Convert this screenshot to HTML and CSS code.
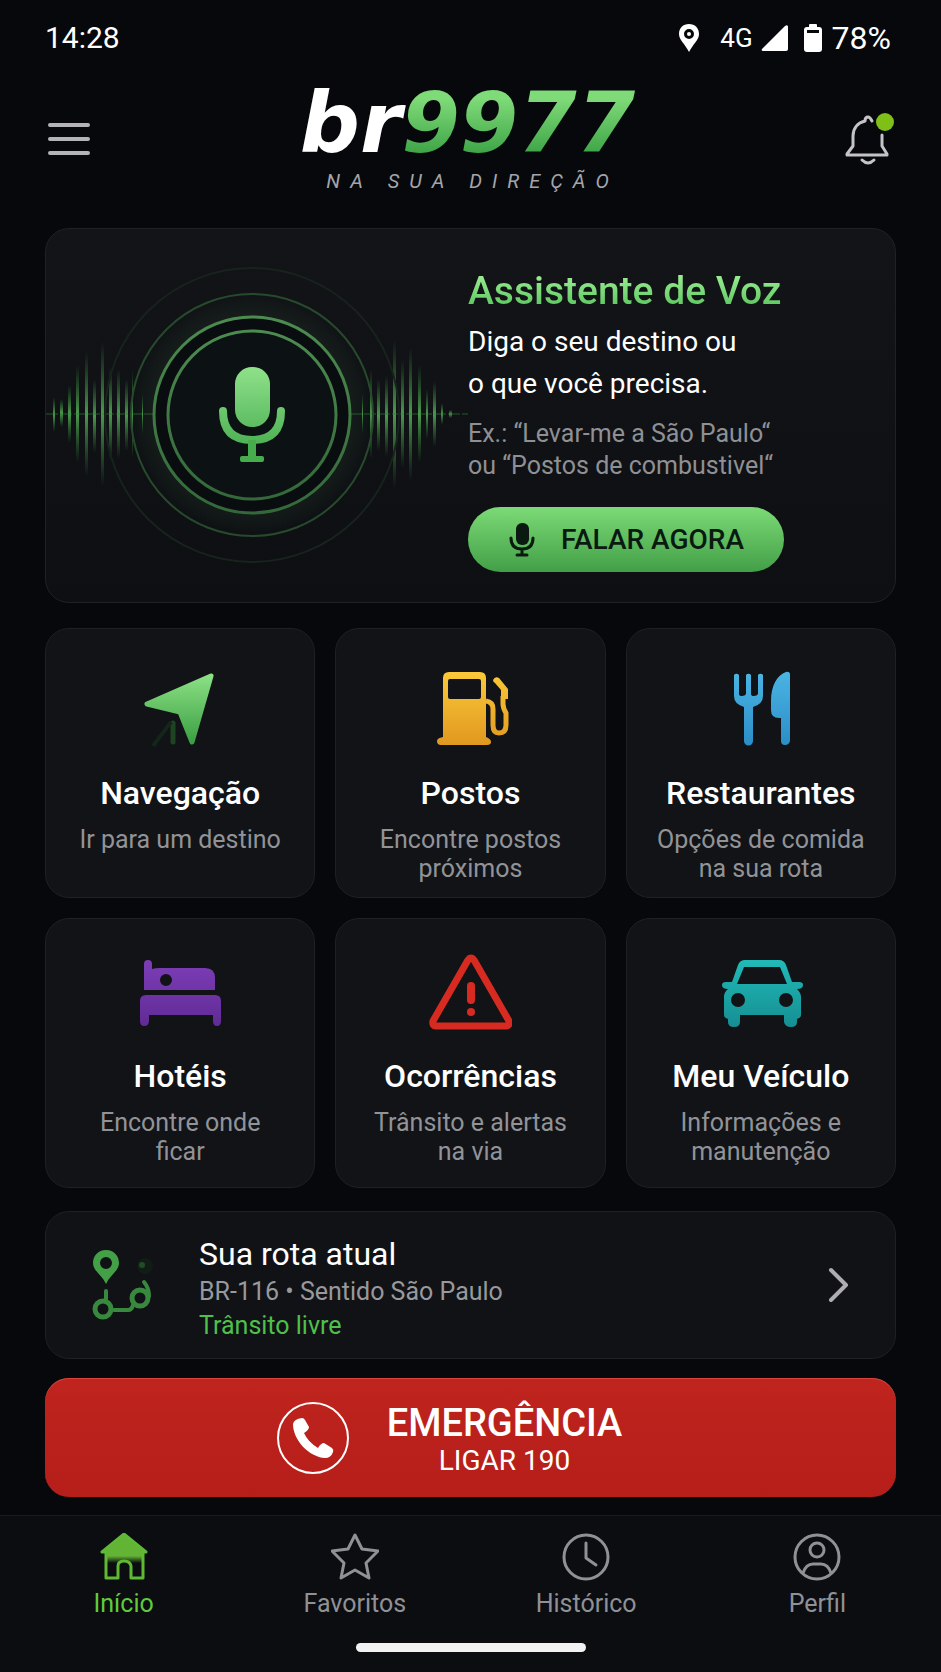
FILE: index.html
```html
<!DOCTYPE html>
<html lang="pt-BR">
<head>
    <meta charset="UTF-8">
    <meta name="viewport" content="width=device-width, initial-scale=1.0">
    <title>br9977 | Na sua direção</title>

    <link rel="stylesheet" href="styles.css">
</head>
<body>

    <!-- shared gradients -->
    <svg class="defs" aria-hidden="true">
        <defs>
            <linearGradient id="green" x1="0" y1="0" x2="0" y2="1">
                <stop offset="0" stop-color="#8be084"/>
                <stop offset="1" stop-color="#3c9f43"/>
            </linearGradient>
            <linearGradient id="yellow" x1="0" y1="0" x2="0" y2="76" gradientUnits="userSpaceOnUse">
                <stop offset="0" stop-color="#fbca3a"/>
                <stop offset="1" stop-color="#e0971f"/>
            </linearGradient>
            <linearGradient id="blue" x1="0" y1="0" x2="0" y2="76" gradientUnits="userSpaceOnUse">
                <stop offset="0" stop-color="#4bb5e4"/>
                <stop offset="1" stop-color="#2b8cc6"/>
            </linearGradient>
            <linearGradient id="purple" x1="0" y1="0" x2="0" y2="76" gradientUnits="userSpaceOnUse">
                <stop offset="0" stop-color="#7f3fba"/>
                <stop offset="1" stop-color="#5f2a94"/>
            </linearGradient>
            <linearGradient id="teal" x1="0" y1="0" x2="0" y2="76" gradientUnits="userSpaceOnUse">
                <stop offset="0" stop-color="#22bdb9"/>
                <stop offset="1" stop-color="#158d93"/>
            </linearGradient>
            <linearGradient id="mic" x1="0" y1="138" x2="0" y2="234" gradientUnits="userSpaceOnUse">
                <stop offset="0" stop-color="#8fe18a"/>
                <stop offset="1" stop-color="#3fa648"/>
            </linearGradient>
            <linearGradient id="ring" x1="0" y1="0" x2="0" y2="1">
                <stop offset="0" stop-color="#4d8c50"/>
                <stop offset="1" stop-color="#34683a"/>
            </linearGradient>
            <linearGradient id="bar" x1="0" y1="0" x2="0" y2="1">
                <stop offset="0" stop-color="#3f9a45" stop-opacity="0"/>
                <stop offset="0.5" stop-color="#56b458"/>
                <stop offset="1" stop-color="#3f9a45" stop-opacity="0"/>
            </linearGradient>
            <radialGradient id="glow">
                <stop offset="0.7" stop-color="#2f5a34" stop-opacity="0.25"/>
                <stop offset="1" stop-color="#2f5a34" stop-opacity="0"/>
            </radialGradient>
            <linearGradient id="house" x1="0" y1="0" x2="0" y2="1">
                <stop offset="0.5" stop-color="#63b334"/>
                <stop offset="0.66" stop-color="#63b334" stop-opacity="0"/>
            </linearGradient>
        </defs>
    </svg>

    <div class="statusbar">
        <span class="time">14:28</span>
        <div class="status">
            <svg width="22" height="28" viewBox="0 0 22 28">
                <path fill="#fff" fill-rule="evenodd" d="M11 0C5 0 1 4 1 10c0 6 6 10 10 18 4-8 10-12 10-18C21 4 17 0 11 0zm0 5a5 5 0 1 1 0 10 5 5 0 0 1 0-10z"/>
                <circle cx="11" cy="10" r="2" fill="#fff"/>
            </svg>
            <span class="network">4G</span>
            <svg width="28" height="28" viewBox="0 0 28 28">
                <path fill="#fff" d="M27 3v22q0 2-2 2H2q-2 0-1-2L24 2q3-2 3 1z"/>
            </svg>
            <svg class="battery" width="18" height="28" viewBox="0 0 18 28">
                <path fill="#fff" fill-rule="evenodd" d="M5 1q0-1 1-1h6q1 0 1 1v2h2q3 0 3 3v19q0 3-3 3H3q-3 0-3-3V6q0-3 3-3h2zM3 6v3h12V6z"/>
            </svg>
            <span class="charge">78%</span>
        </div>
    </div>

    <header>
        <button class="iconbtn" aria-label="Menu">
            <svg width="44" height="52" viewBox="0 0 44 52" stroke="#b4b4b8" stroke-width="4" stroke-linecap="round">
                <path d="M3 12h38M3 26h38M3 40h38"/>
            </svg>
        </button>

        <div class="brand">
            <h1><span class="br">br</span><span class="num">9977</span></h1>
            <p>NA SUA DIREÇÃO</p>
        </div>

        <button class="iconbtn" aria-label="Notificações">
            <svg width="52" height="52" viewBox="0 0 52 52">
                <g fill="none" stroke="#c4c4c8" stroke-width="3" stroke-linecap="round" stroke-linejoin="round">
                    <path d="M28 8c-1-2-2-4-4-4s-3 2-3 4C13 10 9 16 9 23v10L3 41v1h40v-1l-5-8V22"/>
                    <path d="M18 47q6 6 12 0"/>
                </g>
                <circle cx="41" cy="9" r="9" fill="#7fc018"/>
            </svg>
        </button>
    </header>

    <main>
        <section class="voice">
            <svg class="waves" width="426" height="373" viewBox="0 0 426 373" aria-hidden="true">
                <g fill="url(#bar)" opacity="0.85">
                    <rect x="7" y="168" width="2" height="35"/>
                    <rect x="14" y="170" width="3" height="28"/>
                    <rect x="22" y="156" width="3" height="58"/>
                    <rect x="30" y="136" width="3" height="98"/>
                    <rect x="39" y="122" width="3" height="126"/>
                    <rect x="47" y="150" width="3" height="74"/>
                    <rect x="55" y="112" width="3" height="146"/>
                    <rect x="63" y="138" width="3" height="94"/>
                    <rect x="71" y="140" width="3" height="90"/>
                    <rect x="79" y="150" width="3" height="72"/>
                    <rect x="86" y="140" width="1" height="90"/>
                    <rect x="96" y="165" width="1" height="40"/>
                    <rect x="316" y="165" width="1" height="40"/>
                    <rect x="324" y="140" width="2" height="90"/>
                    <rect x="331" y="150" width="3" height="72"/>
                    <rect x="339" y="146" width="3" height="82"/>
                    <rect x="347" y="110" width="3" height="150"/>
                    <rect x="355" y="130" width="3" height="110"/>
                    <rect x="363" y="118" width="3" height="134"/>
                    <rect x="372" y="136" width="3" height="98"/>
                    <rect x="380" y="160" width="2" height="50"/>
                    <rect x="387" y="152" width="3" height="66"/>
                    <rect x="395" y="174" width="2" height="22"/>
                    <rect x="403" y="181" width="3" height="8"/>
                </g>
                <path d="M0 185h108M304 185h118" stroke="#2f7a36" stroke-dasharray="12 2" opacity="0.7"/>
                <circle cx="206" cy="186" r="147" fill="none" stroke="#17231c" stroke-width="2"/>
                <circle cx="206" cy="186" r="121" fill="url(#glow)" stroke="#274a2c" stroke-width="2"/>
                <circle cx="206" cy="186" r="98" fill="#0a0d0f" stroke="url(#ring)" stroke-width="3"/>
                <circle cx="206" cy="186" r="84" fill="#0c1113" stroke="url(#ring)" stroke-width="3"/>
                <rect x="189" y="138" width="35" height="60" rx="17" fill="url(#mic)"/>
                <path d="M177 182q0 29 29 29t29-29" fill="none" stroke="url(#mic)" stroke-width="8" stroke-linecap="round"/>
                <path d="M202 211h8v16h6q2 0 2 2v2q0 2-2 2h-20q-2 0-2-2v-2q0-2 2-2h6z" fill="#46ac4c"/>
            </svg>

            <div class="voicetext">
                <h2>Assistente de Voz</h2>
                <p class="lead">Diga o seu destino ou<br>o que você precisa.</p>
                <p class="example">Ex.: “Levar-me a São Paulo“<br>ou “Postos de combustivel“</p>
                <button class="speakbtn">
                    <svg width="26" height="36" viewBox="0 0 26 36">
                        <rect x="7" y="1" width="13" height="22" rx="6" fill="#0a1a10"/>
                        <path d="M2 16q0 11 11 11t11-11M13 27v6M8 33h10" fill="none" stroke="#0a1a10" stroke-width="3" stroke-linecap="round"/>
                    </svg>
                    FALAR AGORA
                </button>
            </div>
        </section>

        <section class="services">
            <a class="card" href="#navegacao">
                <svg width="84" height="76" viewBox="-4 0 84 76">
                    <path d="M69 5 5 33l33 8 12 30z" fill="url(#green)" stroke="url(#green)" stroke-width="5" stroke-linejoin="round"/>
                    <path d="M31 52v19" stroke="#1d4522" stroke-width="5" stroke-linecap="round"/>
                    <path d="M29 51 11 75" stroke="#132619" stroke-width="4"/>
                </svg>
                <h3>Navegação</h3>
                <p>Ir para um destino</p>
            </a>

            <a class="card" href="#postos">
                <svg width="84" height="76" viewBox="-5 0 84 76">
                    <path fill="url(#yellow)" fill-rule="evenodd" d="M10 66V7q0-6 6-6h31q6 0 6 6v59q5 2 5 5 0 3-4 3H8q-4 0-4-4 0-3 6-4zM17 8q-2 0-2 2v16q0 2 2 2h29q2 0 2-2V10q0-2-2-2z"/>
                    <path d="M53 30q7 1 7 8v16q0 8 6 8 7 0 7-8V42q-3-5-3-9v-8" fill="none" stroke="url(#yellow)" stroke-width="5" stroke-linejoin="round"/>
                    <path d="M60 9q2-4 6-2l9 11v10h-7v-9l-6-7q-2-1-2-3z" fill="url(#yellow)"/>
                </svg>
                <h3>Postos</h3>
                <p>Encontre postos<br>próximos</p>
            </a>

            <a class="card" href="#restaurantes">
                <svg width="84" height="76" viewBox="-4 0 84 76">
                    <path fill="url(#blue)" d="M11 4a3 3 0 0 1 5 0v19q0 2 3 2t4-2V4a3 3 0 0 1 5 0v19q0 2 3 2t4-2V4a3 3 0 0 1 5 0v21q0 8-10 11v34a4 4 0 0 1-9 0V36Q11 33 11 25z"/>
                    <path d="M67 4q0-4-4-3c-9 3-15 14-15 29v9q0 8 8 8h2v23q0 4 4 4t5-4z" fill="url(#blue)"/>
                </svg>
                <h3>Restaurantes</h3>
                <p>Opções de comida<br>na sua rota</p>
            </a>

            <a class="card" href="#hoteis">
                <svg width="84" height="76" viewBox="0 0 84 76">
                    <path fill="url(#purple)" fill-rule="evenodd" d="M6 36V10q0-4 4-4t4 4v5q3-1 8-1h45q10 0 10 10v12zM28 20a6 6 0 1 0 0 12 6 6 0 0 0 0-12z"/>
                    <path fill="url(#purple)" d="M2 47q0-6 6-6h69q6 0 6 6v20q0 5-4 5t-4-5v-6H11v6q0 5-5 5-4 0-4-5z"/>
                </svg>
                <h3>Hotéis</h3>
                <p>Encontre onde<br>ficar</p>
            </a>

            <a class="card" href="#ocorrencias">
                <svg width="84" height="76" viewBox="0 0 84 76">
                    <path d="M40 6q3-4 6 0l35 61q1 5-3 5H8q-4 0-3-5z" fill="none" stroke="#d72b22" stroke-width="7" stroke-linejoin="round"/>
                    <path d="M43 32v14" stroke="#d72b22" stroke-width="8" stroke-linecap="round"/>
                    <circle cx="43" cy="58" r="4" fill="#d72b22"/>
                </svg>
                <h3>Ocorrências</h3>
                <p>Trânsito e alertas<br>na via</p>
            </a>

            <a class="card" href="#veiculo">
                <svg width="84" height="76" viewBox="1 0 84 76">
                    <path fill="url(#teal)" fill-rule="evenodd" d="M14 28l6-17q2-5 7-5h34q5 0 7 5l6 17h7q4 0 4 3 0 4-6 4 4 4 4 8v18q0 3-4 4v3q0 5-6 5t-7-5v-7H22v7q0 5-6 5t-6-5v-3q-4-1-4-4V43q0-5 4-8-6 0-6-4 0-3 4-3zM26 13l-7 17h50l-7-17zM20 39a7 7 0 1 0 0 14 7 7 0 0 0 0-14zM68 39a7 7 0 1 0 0 14 7 7 0 0 0 0-14z"/>
                </svg>
                <h3>Meu Veículo</h3>
                <p>Informações e<br>manutenção</p>
            </a>
        </section>

        <a class="route" href="#rota">
            <svg width="66" height="72" viewBox="0 0 66 72">
                <path fill="#43a047" fill-rule="evenodd" d="M14 1C6 1 1 7 1 14c0 8 9 12 13 21 4-9 13-13 13-21C27 7 22 1 14 1zm0 7a6 6 0 1 1 0 12 6 6 0 0 1 0-12z"/>
                <g fill="none" stroke="#38893d" stroke-linecap="round">
                    <circle cx="11" cy="60" r="8" stroke-width="5"/>
                    <circle cx="48" cy="49" r="8" stroke-width="5"/>
                    <path d="M14 42v8M22 61h14q4 0 5-5M52 33q5 6 5 14" stroke-width="4"/>
                </g>
                <circle cx="53" cy="17" r="8" fill="#111c17"/>
                <circle cx="50" cy="16" r="3" fill="#1f4d26"/>
            </svg>
            <div class="routetext">
                <h3>Sua rota atual</h3>
                <p>BR-116 • Sentido São Paulo</p>
                <p class="free">Trânsito livre</p>
            </div>
            <svg class="chevron" width="22" height="38" viewBox="0 0 22 38">
                <path d="M3 4l15 15L3 34" fill="none" stroke="#aeaeb2" stroke-width="4" stroke-linecap="round" stroke-linejoin="round"/>
            </svg>
        </a>

        <button class="emergency">
            <svg width="74" height="74" viewBox="0 0 74 74">
                <circle cx="37" cy="37" r="35" fill="none" stroke="#fff" stroke-width="2"/>
                <path fill="#fff" d="M17 23q1-5 9-6 2 0 3 2l4 7q0 3-5 6 4 9 14 15 3-5 6-5l8 5q2 2 1 4-2 6-8 6c-16-1-32-18-32-34z"/>
            </svg>
            <span class="emergencytext">
                <strong>EMERGÊNCIA</strong>
                <span>LIGAR 190</span>
            </span>
        </button>
    </main>

    <nav>
        <div class="tabs">
            <a class="tab active" href="#inicio">
                <svg width="48" height="48" viewBox="0 0 48 48">
                    <path d="M24 1 2 19h4v26h12V33q0-5 6-5t7 5v12h12V19h3z" fill="url(#house)" stroke="#5fb935" stroke-width="3" stroke-linejoin="round"/>
                </svg>
                Início
            </a>
            <a class="tab" href="#favoritos">
                <svg width="48" height="48" viewBox="0 0 48 48">
                    <path d="M24 2l7 14 16 2-12 12 3 15-14-8-14 8 3-15L1 18l16-2z"/>
                </svg>
                Favoritos
            </a>
            <a class="tab" href="#historico">
                <svg width="48" height="48" viewBox="0 0 48 48">
                    <circle cx="24" cy="24" r="22"/>
                    <path d="M24 10v15l10 7"/>
                </svg>
                Histórico
            </a>
            <a class="tab" href="#perfil">
                <svg width="48" height="48" viewBox="0 0 48 48">
                    <circle cx="24" cy="24" r="22"/>
                    <circle cx="24" cy="17" r="7"/>
                    <path d="M10 40q3-9 10-9h8q7 0 10 9"/>
                </svg>
                Perfil
            </a>
        </div>
        <div class="homebar"></div>
    </nav>

</body>
</html>
```

FILE: styles.css
```css
* {
    box-sizing: border-box;
    margin: 0;
}

body {
    min-height: 100vh;
    display: flex;
    flex-direction: column;
    background-color: #07080c;
    color: #fff;
    font-family: Roboto, sans-serif;
}

a {
    color: inherit;
    text-decoration: none;
}

button {
    border: none;
    background: none;
    padding: 0;
    color: inherit;
    font-family: inherit;
    cursor: pointer;
}

svg {
    display: block;
    flex-shrink: 0;
}

.defs {
    position: absolute;
    width: 0;
    height: 0;
}

/* status bar */

.statusbar {
    display: flex;
    align-items: center;
    justify-content: space-between;
    padding: 20px 50px 19px 45px;
}

.time {
    font-size: 30px;
    line-height: 36px;
}

.status {
    display: flex;
    align-items: center;
}

.charge {
    font-size: 32px;
    line-height: 36px;
}

.network {
    font-size: 26px;
    margin: 0 8px 0 20px;
}

.battery {
    margin: 0 10px 0 15px;
}

/* header */

header {
    display: flex;
    align-items: center;
    justify-content: space-between;
    padding: 0 45px 0 47px;
}

.brand {
    text-align: center;
    padding-bottom: 12px;
}

.brand h1 {
    font-family: "DejaVu Sans", sans-serif;
    font-size: 84px;
    line-height: 96px;
    font-weight: bold;
    font-style: italic;
}

.num {
    background: linear-gradient(#7fda78 25%, #3fa648 80%);
    -webkit-background-clip: text;
    background-clip: text;
    color: transparent;
}

.brand p {
    font-size: 20px;
    line-height: 20px;
    font-style: italic;
    letter-spacing: 10px;
    color: #a4a5a9;
    padding-left: 10px;
}

/* main */

main {
    padding: 25px 45px 18px;
}

.voice {
    display: flex;
    align-items: center;
    border: 1px solid #1f2124;
    border-radius: 24px;
    background: linear-gradient(#121417, #0d0f13);
}

.voicetext {
    margin-left: -4px;
    padding-top: 9px;
}

.voicetext h2 {
    width: max-content;
    font-size: 39px;
    line-height: 46px;
    font-weight: 500;
    background: linear-gradient(#97ea8e 20%, #5cc660 85%);
    -webkit-background-clip: text;
    background-clip: text;
    color: transparent;
}

.lead {
    font-size: 28px;
    line-height: 42px;
    margin-top: 7px;
}

.example {
    font-size: 25px;
    line-height: 32px;
    color: #8f9094;
    margin-top: 13px;
}

.speakbtn {
    display: flex;
    align-items: center;
    gap: 26px;
    margin-top: 25px;
    padding: 0 40px 0 41px;
    height: 65px;
    border-radius: 33px;
    background: linear-gradient(#7cda76, #429f47);
    color: #0a1a10;
    font-size: 28px;
    font-weight: 500;
}

.services {
    display: grid;
    grid-template-columns: repeat(3, 1fr);
    gap: 20px;
    margin-top: 25px;
}

.card {
    min-height: 270px;
    display: flex;
    flex-direction: column;
    align-items: center;
    text-align: center;
    padding-top: 42px;
    border: 1px solid #1e2023;
    border-radius: 24px;
    background-color: #111317;
}

.card:nth-child(n+4) {
    padding-top: 35px;
}

.card h3 {
    font-size: 32px;
    line-height: 38px;
    font-weight: 500;
    margin-top: 27px;
}

.card p {
    font-size: 25px;
    line-height: 29px;
    color: #929397;
    margin-top: 13px;
}

.route {
    display: flex;
    align-items: center;
    min-height: 148px;
    margin-top: 23px;
    padding: 0 45px 0 46px;
    border: 1px solid #1e2023;
    border-radius: 24px;
    background-color: #101216;
}

.routetext {
    flex: 1;
    margin-left: 41px;
    padding-top: 6px;
}

.routetext h3 {
    font-size: 32px;
    line-height: 42px;
    font-weight: 400;
}

.routetext p {
    font-size: 25px;
    line-height: 34px;
    color: #98999d;
}

.routetext .free {
    color: #4fc04a;
}

.emergency {
    width: 100%;
    min-height: 119px;
    display: flex;
    align-items: center;
    justify-content: center;
    gap: 37px;
    margin-top: 19px;
    padding-right: 43px;
    border-radius: 24px;
    background: linear-gradient(#bf241e, #b61e19);
    box-shadow: inset 0 1px #d8443c;
}

.emergencytext {
    display: flex;
    flex-direction: column;
    align-items: center;
    padding-top: 4px;
    font-size: 28px;
    line-height: 34px;
}

.emergencytext strong {
    font-size: 38px;
    line-height: 42px;
    font-weight: 500;
}

/* bottom navigation */

nav {
    margin-top: auto;
    border-top: 1px solid #17191c;
    background-color: #0b0d11;
}

.tabs {
    display: grid;
    grid-template-columns: repeat(4, 1fr);
    padding: 17px 8px 10px;
}

.tab {
    display: flex;
    flex-direction: column;
    align-items: center;
    gap: 8px;
    font-size: 25px;
    line-height: 30px;
    color: #909195;
}

.tab svg {
    fill: none;
    stroke: #909195;
    stroke-width: 3;
    stroke-linejoin: round;
    stroke-linecap: round;
}

.tab.active {
    color: #5fcb3c;
}

.homebar {
    width: 230px;
    height: 9px;
    border-radius: 5px;
    background-color: #f2f2f2;
    margin: 14px auto 20px;
}
```
